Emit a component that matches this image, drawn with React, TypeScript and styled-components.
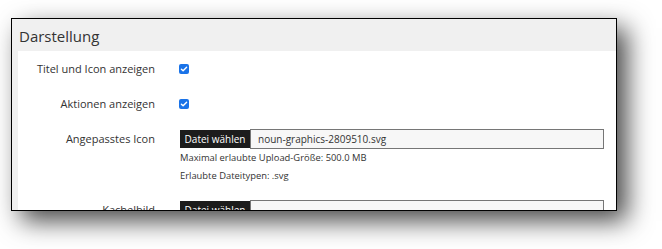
import React from "react";
import styled, { createGlobalStyle } from "styled-components";

const GlobalStyle = createGlobalStyle`
  html, body {
    margin: 0;
    padding: 0;
    background: #ffffff;
  }
  body {
    font-family: "Open Sans", "Liberation Sans", sans-serif;
    color: #333333;
  }
`;

const Stage = styled.div`
  padding: 18px 0 0 11px;
  height: 249px;
  box-sizing: border-box;
  overflow: hidden;
`;

const Window = styled.section`
  width: 606px;
  height: 193px;
  box-sizing: border-box;
  border: 1px solid #000000;
  background: #f0f0f0;
  overflow: hidden;
  box-shadow: 10px 10px 24px rgba(0, 0, 0, 0.72);
  display: flex;
  flex-direction: column;
`;

const Header = styled.h2`
  margin: 0;
  height: 32px;
  flex: none;
  padding: 0 0 0 7px;
  display: flex;
  align-items: center;
  font-size: 15px;
  font-weight: 400;
  color: #333333;
  padding-top: 1px;
  box-sizing: border-box;
`;

const Body = styled.div`
  flex: 1;
  padding-left: 6px;
  display: flex;
`;

const Panel = styled.div`
  flex: 1;
  background: #ffffff;
  padding: 8px 12px 0 0;
  display: flex;
  flex-direction: column;
  gap: 15px;
`;

const Row = styled.div`
  display: grid;
  grid-template-columns: 137px 1fr;
  column-gap: 25px;
  align-items: start;
`;

const Label = styled.div`
  font-size: 11px;
  line-height: 20px;
  height: 20px;
  text-align: right;
  color: #333333;
  white-space: nowrap;
`;

const Control = styled.div`
  display: flex;
  flex-direction: column;
`;

const CheckCell = styled.div`
  height: 20px;
  display: flex;
  align-items: center;
`;

const CheckBox = styled.span<{ $checked: boolean }>`
  width: 10px;
  height: 10px;
  border-radius: 2px;
  margin-left: -1px;
  background: ${(p) => (p.$checked ? "#1a73e8" : "#ffffff")};
  display: flex;
  align-items: center;
  justify-content: center;
`;

const FileField = styled.div`
  display: flex;
  align-items: center;
  height: 20px;
`;

const FileButton = styled.span`
  height: 18px;
  width: 70px;
  flex: none;
  background: #1c1c1c;
  color: #ffffff;
  font-size: 10px;
  line-height: 18px;
  text-align: center;
  white-space: nowrap;
`;

const FileName = styled.div`
  flex: 1;
  height: 20px;
  box-sizing: border-box;
  border: 1px solid #767676;
  background: #f7f7f7;
  font-size: 10px;
  line-height: 18px;
  padding-left: 7px;
  color: #333333;
  white-space: nowrap;
`;

const Help = styled.div`
  font-size: 9.4px;
  line-height: 18px;
  color: #333333;
  white-space: nowrap;
`;

const Check = ({ checked }: { checked: boolean }) => (
  <CheckBox $checked={checked} role="checkbox" aria-checked={checked}>
    {checked && (
      <svg width="8" height="8" viewBox="0 0 8 8">
        <path d="M1.4 4.2 L3.1 5.8 L6.6 2.2" fill="none" stroke="#ffffff" strokeWidth="1.4" strokeLinecap="round" strokeLinejoin="round" />
      </svg>
    )}
  </CheckBox>
);

const FileInput = ({ name }: { name?: string }) => (
  <FileField>
    <FileButton>Datei wählen</FileButton>
    <FileName>{name}</FileName>
  </FileField>
);

export default function App() {
  return (
    <>
      <GlobalStyle />
      <Stage>
        <Window>
          <Header>Darstellung</Header>
          <Body>
            <Panel>
              <Row>
                <Label>Titel und Icon anzeigen</Label>
                <CheckCell>
                  <Check checked />
                </CheckCell>
              </Row>
              <Row>
                <Label>Aktionen anzeigen</Label>
                <CheckCell>
                  <Check checked />
                </CheckCell>
              </Row>
              <Row>
                <Label>Angepasstes Icon</Label>
                <Control>
                  <FileInput name="noun-graphics-2809510.svg" />
                  <Help>Maximal erlaubte Upload-Größe: 500.0 MB</Help>
                  <Help>Erlaubte Dateitypen: .svg</Help>
                </Control>
              </Row>
              <Row>
                <Label>Kachelbild</Label>
                <Control>
                  <FileInput />
                </Control>
              </Row>
            </Panel>
          </Body>
        </Window>
      </Stage>
    </>
  );
}
